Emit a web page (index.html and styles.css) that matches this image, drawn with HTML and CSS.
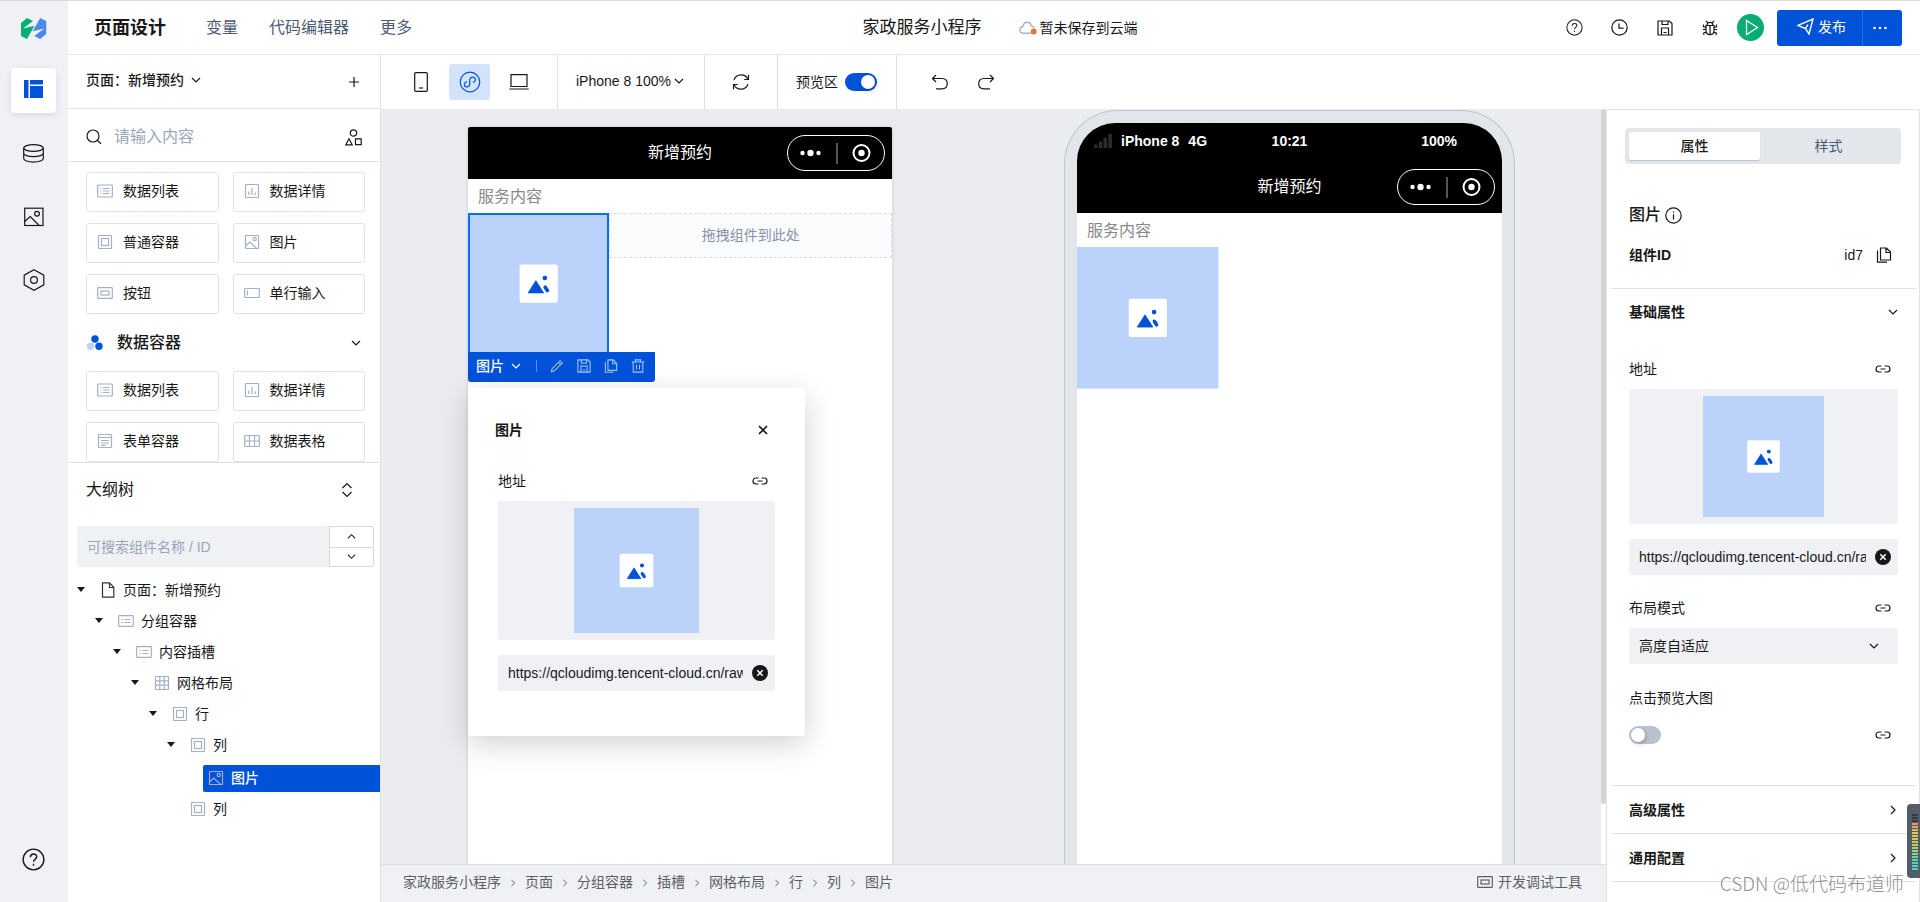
FILE: index.html
```html
<!DOCTYPE html>
<html lang="zh-CN">
<head>
<meta charset="utf-8">
<title>页面设计 - 家政服务小程序</title>
<link rel="stylesheet" href="styles.css">
</head>
<body>
<svg class="sprite" aria-hidden="true">
  <symbol id="chev-down" viewBox="0 0 10 10"><path d="M1 3l4 4 4-4"/></symbol>
  <symbol id="chev-up" viewBox="0 0 10 10"><path d="M1 7l4-4 4 4"/></symbol>
  <symbol id="chev-right" viewBox="0 0 10 10"><path d="M3 1l4 4-4 4"/></symbol>
  <symbol id="help" viewBox="0 0 20 20"><circle cx="10" cy="10" r="9"/><path d="M7.3 8c0-3.8 5.5-3.6 5.5-.4 0 2-2.7 2.2-2.7 4.4M10 13.800v1.600"/></symbol>
  <symbol id="copy" viewBox="0 0 16 16"><path d="M4.500 1h6l4 4v8h-10zM10 1v4.500h4.500M1.500 3.500V15.200H11"/></symbol>
  <symbol id="save" viewBox="0 0 16 16"><path d="M1 1h11.500L15 3.500V15H1zM4.500 15V8h7v7M5 1v3.500h6V1M6.500 12.500h3"/></symbol>
  <symbol id="link" viewBox="0 0 16 16"><path d="M6.500 5H4a3 3 0 0 0 0 6h2.500M9.500 5H12a3 3 0 0 1 0 6H9.500M5.500 8h5"/></symbol>
  <symbol id="clear" viewBox="0 0 16 16"><circle cx="8" cy="8" r="8" fill="#181818" stroke="none"/><path d="M5.300 5.300l5.400 5.400M10.700 5.300l-5.400 5.400" stroke="#fff" stroke-width="1.500"/></symbol>
  <symbol id="c-list" viewBox="0 0 16 16"><rect x=".7" y="2" width="14.600" height="12" rx=".5"/><path d="M3.500 5.500h1M3.500 8h1M3.500 10.500h1M6 5.500h6.500M6 8h6.500M6 10.500h6.500"/></symbol>
  <symbol id="c-slot" viewBox="0 0 16 16"><rect x=".7" y="2.700" width="14.600" height="10.600" rx=".5"/><path d="M3.500 6.500h1.500M3.500 9.500h1.500M6.500 6.500h6M6.500 9.500h6"/></symbol>
  <symbol id="c-chart" viewBox="0 0 16 16"><rect x="1.500" y="1.500" width="13" height="13" rx=".5"/><path d="M4.800 12V8.500M8 12V5M11.200 12V9.500"/></symbol>
  <symbol id="c-box" viewBox="0 0 16 16"><rect x="1.500" y="1.500" width="13" height="13" rx=".5"/><rect x="4.500" y="4.500" width="7" height="7"/></symbol>
  <symbol id="c-image" viewBox="0 0 16 16"><rect x="1.500" y="1.500" width="13" height="13" rx=".5"/><circle cx="10.700" cy="5" r="1.600"/><path d="M1.500 12l4.200-4 6.800 6.300"/></symbol>
  <symbol id="c-button" viewBox="0 0 16 16"><rect x=".7" y="2.700" width="14.600" height="10.600" rx=".5"/><rect x="4" y="6" width="8" height="4"/></symbol>
  <symbol id="c-input" viewBox="0 0 16 16"><rect x=".7" y="3.500" width="14.600" height="9" rx=".5"/><path d="M3.500 5.500v5"/></symbol>
  <symbol id="c-form" viewBox="0 0 16 16"><rect x="1.500" y="1.500" width="13" height="13" rx=".5"/><path d="M1.500 4.500h13M4 7.500h8M4 10h8M4 12.300h4.500"/></symbol>
  <symbol id="c-table" viewBox="0 0 16 16"><rect x=".7" y="2.500" width="14.600" height="11" rx=".5"/><path d="M.7 8h14.600M5.500 2.500v11M10.500 2.500v11"/></symbol>
  <symbol id="c-grid" viewBox="0 0 16 16"><rect x="1.500" y="1.500" width="13" height="13" rx=".5"/><path d="M1.500 5.800h13M1.500 10.200h13M5.800 1.500v13M10.200 1.500v13"/></symbol>
  <symbol id="c-page" viewBox="0 0 16 16"><path d="M2.500.800h7l4.300 4.500v9.900H2.500zM9.500 1v4.500h4"/></symbol>
  <symbol id="placeholder" viewBox="0 0 141 141"><path d="M0 0h141v141H0z" fill="#bbd3fb" stroke="none"/><rect x="51.500" y="51.500" width="38" height="38" rx="2" fill="#fff" stroke="none"/><path d="M67.700 67.500L60 79.700h15.500z" fill="#0052d9" stroke="#0052d9" stroke-width=".8" stroke-linejoin="round"/><circle cx="76.700" cy="64.800" r="2.300" fill="#0052d9" stroke="none"/><path d="M77 74l2.200 3.400" stroke="#0052d9" stroke-width="3.600" stroke-linecap="round"/></symbol>
  <symbol id="capsule" viewBox="0 0 98 36"><rect x=".5" y=".5" width="97" height="35" rx="17.500" stroke="#fff"/><g fill="#fff"><circle cx="15.500" cy="18" r="2.200"/><circle cx="23.500" cy="18" r="3.200"/><circle cx="31.500" cy="18" r="2.200"/><circle cx="74.500" cy="18" r="3.200"/></g><circle cx="74.500" cy="18" r="8" stroke="#fff" stroke-width="2"/><path d="M50 8v21" stroke="#aaa"/></symbol>
</svg>

<div class="app">
  <nav class="rail" aria-label="主导航">
    <a class="logo" href="#" aria-label="首页"><svg width="26" height="22" viewBox="0 0 26 22"><path d="M0 5L6 0l6 3L2 10.500l11.500-2.800L6 21 0 18z" fill="#07ad73" stroke="none"/><path d="M25.200 16l-6 5-6-3 10-7.500-11.500 2.800L19.200 0l6 3z" fill="#4a87f0" stroke="none"/></svg></a>
    <button class="rail-item is-active" aria-label="页面"><svg width="20" height="18" viewBox="0 0 20 18"><path d="M0 0h4.500v18H0zM6 0h13v4.500H6zM6 6h13v12H6z" fill="#0052d9" stroke="none"/></svg></button>
    <button class="rail-item" aria-label="数据源"><svg width="21" height="19" viewBox="0 0 21 19"><ellipse cx="10.500" cy="4" rx="9.800" ry="3.400"/><path d="M.7 4v10.500c0 1.800 4.300 3.600 9.800 3.600s9.800-1.800 9.800-3.600V4M.7 9.300c0 1.800 4.300 3.400 9.800 3.400s9.800-1.600 9.800-3.400"/></svg></button>
    <button class="rail-item" aria-label="素材"><svg width="20" height="20" viewBox="0 0 20 20"><rect x=".7" y="1.200" width="18.300" height="17.300"/><circle cx="13" cy="6.800" r="2.400"/><path d="M.7 14.500l5.500-5 9 9"/></svg></button>
    <button class="rail-item" aria-label="设置"><svg width="22" height="22" viewBox="0 0 22 22"><path d="M11 .8l9.800 5.300v9.800L11 21.200 1.200 15.900V6.100z"/><circle cx="11" cy="11" r="3.400"/></svg></button>
    <button class="rail-item rail-help" aria-label="帮助"><svg width="23" height="23"><use href="#help"/></svg></button>
  </nav>

  <div class="main">
    <header class="header">
      <nav class="menu">
        <a class="menu-current" href="#">页面设计</a>
        <a href="#">变量</a>
        <a href="#">代码编辑器</a>
        <a href="#">更多</a>
      </nav>
      <div class="project">
        <h1>家政服务小程序</h1>
        <div class="save-state"><svg width="18" height="14" viewBox="0 0 18 14"><path d="M12 12.300H4.500C-.300 12-.200 5.800 4 5.500 4.800-.200 11.500 0 12.300 5c1.400.2 2.500.8 3 2" stroke="#a3b1c9" stroke-width="1.400"/><circle cx="14.700" cy="10.500" r="2.900" fill="#ed7029" stroke="none"/></svg>暂未保存到云端</div>
      </div>
      <div class="actions">
        <button class="icon-btn" aria-label="帮助"><svg width="17" height="17"><use href="#help"/></svg></button>
        <button class="icon-btn" aria-label="历史"><svg width="17" height="17" viewBox="0 0 17 17"><circle cx="8.500" cy="8.500" r="7.700"/><path d="M8 4.500v4.700h4.500"/></svg></button>
        <button class="icon-btn" aria-label="保存"><svg width="16" height="16"><use href="#save"/></svg></button>
        <button class="icon-btn" aria-label="调试"><svg width="16" height="16" viewBox="0 0 16 16"><path d="M4 5.500h8v5c0 5.500-8 5.500-8 0zM5 5.300c0-4 6-4 6 0M8 5.500v9M5.500 2.500L4 .8M10.500 2.500L12 .8M4 7.500L1.500 6.800V4.500M12 7.500l2.500-.7V4.500M4 9.500H1M12 9.500h3M4.300 12l-2.500 1v2M11.700 12l2.500 1v2"/></svg></button>
        <button class="run" aria-label="预览"><svg width="14" height="17" viewBox="0 0 14 17"><path d="M1.500 1.500l11 7-11 7z" stroke="#fff" stroke-width="1.300"/></svg></button>
        <div class="publish">
          <button class="publish-main"><svg width="17" height="17" viewBox="0 0 17 17"><path d="M1 7.300L16 1l-4 15-3.500-5.500zM8.500 10.500l2.500-3.800" stroke="#fff" stroke-width="1.400"/></svg>发布</button>
          <button class="publish-more" aria-label="更多操作"><svg width="16" height="4" viewBox="0 0 16 4"><g fill="#fff" stroke="none"><circle cx="2.500" cy="2" r="1.300"/><circle cx="8" cy="2" r="1.300"/><circle cx="13.500" cy="2" r="1.300"/></g></svg></button>
        </div>
      </div>
    </header>

    <div class="workspace">
      <aside class="library">
        <div class="page-bar">
          <button class="page-select">页面：新增预约<svg width="10" height="10"><use href="#chev-down"/></svg></button>
          <button class="icon-btn" aria-label="新增"><svg width="12" height="12" viewBox="0 0 12 12"><path d="M6 1v10M1 6h10"/></svg></button>
        </div>
        <div class="search-bar">
          <svg width="16" height="16" viewBox="0 0 16 16"><circle cx="7" cy="7" r="6"/><path d="M11.500 11.500l3.500 3.300"/></svg>
          <input type="text" placeholder="请输入内容" aria-label="搜索组件">
          <button class="icon-btn" aria-label="分类"><svg width="17" height="17" viewBox="0 0 17 17"><circle cx="8.500" cy="4" r="3.200"/><path d="M4 9.800L7.200 15.800H.8zM10.500 9.800h5.700v5.900h-5.700z"/></svg></button>
        </div>
        <div class="components">
          <div class="cards">
            <button class="card"><svg><use href="#c-list"/></svg>数据列表</button>
            <button class="card"><svg><use href="#c-chart"/></svg>数据详情</button>
            <button class="card"><svg><use href="#c-box"/></svg>普通容器</button>
            <button class="card"><svg><use href="#c-image"/></svg>图片</button>
            <button class="card"><svg><use href="#c-button"/></svg>按钮</button>
            <button class="card"><svg><use href="#c-input"/></svg>单行输入</button>
          </div>
          <button class="group-head"><svg width="18" height="16" viewBox="0 0 18 16"><g stroke="none"><circle cx="9" cy="4" r="3.700" fill="#0052d9"/><circle cx="4.500" cy="11.300" r="3.700" fill="#bbd3fb"/><circle cx="13" cy="11.300" r="3.700" fill="#0052d9"/></g></svg><span>数据容器</span><svg width="10" height="10"><use href="#chev-down"/></svg></button>
          <div class="cards">
            <button class="card"><svg><use href="#c-list"/></svg>数据列表</button>
            <button class="card"><svg><use href="#c-chart"/></svg>数据详情</button>
            <button class="card"><svg><use href="#c-form"/></svg>表单容器</button>
            <button class="card"><svg><use href="#c-table"/></svg>数据表格</button>
          </div>
        </div>
        <section class="outline">
          <div class="outline-head">大纲树<button class="icon-btn" aria-label="展开"><svg width="12" height="16" viewBox="0 0 12 16"><path d="M1.500 6L6 1.500 10.500 6M1.500 10L6 14.500l4.500-4.500"/></svg></button></div>
          <div class="outline-search">
            <input type="text" placeholder="可搜索组件名称 / ID" aria-label="搜索大纲">
            <div class="stepper">
              <button aria-label="上一个"><svg width="9" height="9"><use href="#chev-up"/></svg></button>
              <button aria-label="下一个"><svg width="9" height="9"><use href="#chev-down"/></svg></button>
            </div>
          </div>
          <ul class="tree">
            <li><div class="node"><i class="caret"></i><svg class="dark"><use href="#c-page"/></svg>页面：新增预约</div>
            <ul><li><div class="node"><i class="caret"></i><svg><use href="#c-slot"/></svg>分组容器</div>
            <ul><li><div class="node"><i class="caret"></i><svg><use href="#c-slot"/></svg>内容插槽</div>
            <ul><li><div class="node"><i class="caret"></i><svg><use href="#c-grid"/></svg>网格布局</div>
            <ul><li><div class="node"><i class="caret"></i><svg><use href="#c-box"/></svg>行</div>
            <ul>
              <li><div class="node"><i class="caret"></i><svg><use href="#c-box"/></svg>列</div>
                <ul><li><div class="node is-selected"><svg><use href="#c-image"/></svg>图片</div></li></ul></li>
              <li><div class="node is-leaf"><svg><use href="#c-box"/></svg>列</div></li>
            </ul></li></ul></li></ul></li></ul></li></ul></li>
          </ul>
        </section>
      </aside>

      <div class="editor">
        <div class="toolbar">
          <div class="tool-group devices">
            <button class="device" aria-label="手机"><svg width="14" height="20" viewBox="0 0 14 20"><rect x=".7" y=".7" width="12.600" height="18.600" rx="1"/><path d="M5 16h4"/></svg></button>
            <button class="device is-active" aria-label="小程序"><svg width="22" height="22" viewBox="0 0 22 22"><circle cx="11" cy="11" r="9.800"/><path d="M8 10.500c-5.500 2.500-1 7.500 2 4.500 2-2-.5-6 1.500-8 3-3 8 2 2.500 4.500"/></svg></button>
            <button class="device" aria-label="电脑"><svg width="20" height="16" viewBox="0 0 20 16"><path d="M2 .7h16v11.800H2zM.3 15h19.400"/></svg></button>
          </div>
          <div class="tool-group"><button class="zoom">iPhone 8 100%<svg width="10" height="10"><use href="#chev-down"/></svg></button></div>
          <div class="tool-group"><button class="icon-btn refresh" aria-label="刷新"><svg width="20" height="18" viewBox="0 0 20 18"><path d="M3 6.800C5.500.5 14 .2 16.800 6M17.500 1.800V6.500h-4.300M17 11.200C14.500 17.500 6 17.800 3.200 12M2.500 16.200v-4.700h4.300"/></svg></button></div>
          <div class="tool-group preview-switch"><label for="preview">预览区</label><input class="switch" type="checkbox" id="preview" checked></div>
          <div class="tool-group history">
            <button class="icon-btn" aria-label="撤销"><svg width="18" height="16" viewBox="0 0 18 16"><path d="M5 1L1.500 4.500 5 8M1.500 4.500H11c7 .3 7 10 0 10.300H5"/></svg></button>
            <button class="icon-btn" aria-label="重做"><svg width="18" height="16" viewBox="0 0 18 16"><path d="M13 1l3.500 3.500L13 8M16.500 4.500H7c-7 .3-7 10 0 10.300h6"/></svg></button>
          </div>
        </div>

        <div class="editor-body">
          <div class="stage">
            <div class="canvas">
              <div class="screen">
                <div class="nav-bar"><span>新增预约</span><svg class="capsule"><use href="#capsule"/></svg></div>
                <p class="field-label">服务内容</p>
                <div class="columns">
                  <div class="picture is-selected">
                    <svg><use href="#placeholder"/></svg>
                    <div class="float-bar">
                      <button class="float-name">图片<svg width="10" height="10"><use href="#chev-down"/></svg></button>
                      <span class="float-sep"></span>
                      <button aria-label="编辑"><svg viewBox="0 0 16 16"><path d="M2.500 11L11.500 2l2.500 2.500-9 9-3.500 1zM9.500 4L12 6.500"/></svg></button>
                      <button aria-label="保存"><svg><use href="#save"/></svg></button>
                      <button aria-label="复制"><svg><use href="#copy"/></svg></button>
                      <button aria-label="删除"><svg viewBox="0 0 16 16"><path d="M.8 3.500h14.400M2.500 3.500V15h11V3.500M5 3.500V1h6v2.500M6.300 6.500V12M9.700 6.500V12"/></svg></button>
                    </div>
                    <section class="popup">
                      <div class="popup-head"><h2>图片</h2><button class="icon-btn" aria-label="关闭"><svg width="10" height="10" viewBox="0 0 10 10"><path d="M1 1l8 8M9 1L1 9" stroke-width="1.700"/></svg></button></div>
                      <div class="popup-form">
                        <div class="field-head"><label for="popup-url">地址</label><button class="icon-btn" aria-label="绑定"><svg width="16" height="16"><use href="#link"/></svg></button></div>
                        <div class="thumb"><svg width="125" height="125"><use href="#placeholder"/></svg></div>
                        <div class="url-box"><input id="popup-url" type="text" value="https://qcloudimg.tencent-cloud.cn/raw/"><button class="icon-btn" aria-label="清除"><svg width="16" height="16"><use href="#clear"/></svg></button></div>
                      </div>
                    </section>
                  </div>
                  <div class="drop-zone">拖拽组件到此处</div>
                </div>
              </div>

              <div class="phone">
                <div class="phone-screen">
                  <div class="status-bar">
                    <span class="carrier"><svg width="18" height="14" viewBox="0 0 18 14"><path d="M0 10.500h3.500V14H0zM4.800 7.500h3.500V14H4.800zM9.500 3.800H13V14H9.500zM14.300 0H18v14h-3.700z" fill="#2b2b2b" stroke="none"/></svg><b>iPhone 8</b><b>4G</b></span>
                    <b>10:21</b>
                    <b class="battery">100%</b>
                  </div>
                  <div class="nav-bar"><span>新增预约</span><svg class="capsule"><use href="#capsule"/></svg></div>
                  <p class="field-label">服务内容</p>
                  <div class="columns"><div class="picture"><svg><use href="#placeholder"/></svg></div></div>
                </div>
              </div>
              <div class="scroll-track"><div class="scroll-thumb"></div></div>
            </div>
            <footer class="footer">
              <nav class="crumbs" aria-label="路径">
                <a href="#">家政服务小程序</a><svg><use href="#chev-right"/></svg><a href="#">页面</a><svg><use href="#chev-right"/></svg><a href="#">分组容器</a><svg><use href="#chev-right"/></svg><a href="#">插槽</a><svg><use href="#chev-right"/></svg><a href="#">网格布局</a><svg><use href="#chev-right"/></svg><a href="#">行</a><svg><use href="#chev-right"/></svg><a href="#">列</a><svg><use href="#chev-right"/></svg><a href="#">图片</a>
              </nav>
              <button class="devtools"><svg width="16" height="16"><use href="#c-button"/></svg>开发调试工具</button>
            </footer>
          </div>

          <aside class="props">
            <div class="tabs" role="tablist"><button class="tab is-active" role="tab">属性</button><button class="tab" role="tab">样式</button></div>
            <div class="props-title"><h2>图片</h2><svg width="17" height="17" viewBox="0 0 17 17"><circle cx="8.500" cy="8.500" r="7.700"/><path d="M8.500 7.300V12.500M8.500 4.500v1.300" stroke-width="1.200"/></svg></div>
            <div class="props-id"><strong>组件ID</strong><span>id7</span><button class="icon-btn" aria-label="复制ID"><svg width="16" height="16"><use href="#copy"/></svg></button></div>
            <button class="section-head">基础属性<svg width="10" height="10"><use href="#chev-down"/></svg></button>
            <div class="section-form">
              <div class="field-head"><label for="prop-url">地址</label><button class="icon-btn" aria-label="绑定"><svg width="16" height="16"><use href="#link"/></svg></button></div>
              <div class="thumb"><svg width="121" height="121"><use href="#placeholder"/></svg></div>
              <div class="url-box"><input id="prop-url" type="text" value="https://qcloudimg.tencent-cloud.cn/raw/"><button class="icon-btn" aria-label="清除"><svg width="16" height="16"><use href="#clear"/></svg></button></div>
              <div class="field-head next"><label for="mode">布局模式</label><button class="icon-btn" aria-label="绑定"><svg width="16" height="16"><use href="#link"/></svg></button></div>
              <div class="select-box"><select id="mode"><option>高度自适应</option></select><svg width="10" height="10"><use href="#chev-down"/></svg></div>
              <div class="field-head next"><label for="enlarge">点击预览大图</label></div>
              <div class="switch-row"><input class="switch" type="checkbox" id="enlarge"><button class="icon-btn" aria-label="绑定"><svg width="16" height="16"><use href="#link"/></svg></button></div>
            </div>
            <button class="section-head ruled">高级属性<svg width="10" height="10"><use href="#chev-right"/></svg></button>
            <button class="section-head ruled">通用配置<svg width="10" height="10"><use href="#chev-right"/></svg></button>
          </aside>
        </div>
      </div>
    </div>
  </div>
</div>
<div class="meter" aria-hidden="true"><div class="meter-bars"></div></div>
<div class="watermark">CSDN @低代码布道师</div>
</body>
</html>
```

FILE: styles.css
```css
* { box-sizing: border-box; }

body {
  margin: 0;
  color: #181818;
  background: #fff;
  font: 14px/24px "Liberation Sans", "Noto Sans CJK SC", sans-serif;
}

button, input, select {
  margin: 0;
  padding: 0;
  border: 0;
  background: none;
  color: inherit;
  font: inherit;
  outline: none;
}

a { color: inherit; text-decoration: none; }
h1, h2, p, ul { margin: 0; padding: 0; }
ul { list-style: none; }
h2 { font-size: 14px; }

svg {
  display: block;
  flex: none;
  fill: none;
  stroke: currentColor;
  stroke-width: 1.2;
}

.sprite { position: absolute; width: 0; height: 0; }

.icon-btn { display: flex; flex: none; align-items: center; justify-content: center; }

.app {
  display: flex;
  height: 100vh;
  border-top: 1px solid #dcdcdc;
}

/* Icon rail */
.rail {
  display: flex;
  flex: none;
  flex-direction: column;
  align-items: center;
  gap: 18px;
  width: 68px;
  padding: 17px 1px 20px 0;
  background: #f0f1f5;
}
.logo { display: block; margin-bottom: 10px; }
.rail-item {
  display: flex;
  align-items: center;
  justify-content: center;
  width: 45px;
  height: 45px;
  border-radius: 4px;
}
.rail-item.is-active { padding-bottom: 3px; background: #fff; box-shadow: 0 2px 6px rgba(40, 60, 100, .12); }
.rail-help { margin-top: auto; }

/* Header */
.main { display: flex; flex: 1; flex-direction: column; min-width: 0; }
.header {
  display: grid;
  flex: none;
  grid-template-columns: 1fr auto 1fr;
  align-items: center;
  height: 54px;
  padding: 0 18px 0 26px;
  border-bottom: 1px solid #e4e6ec;
}
.menu { display: flex; align-items: center; gap: 32px; color: #4b5b76; font-size: 16px; }
.menu a + a + a { margin-left: -1px; }
.menu .menu-current { margin-right: 8px; color: #181818; font-size: 18px; font-weight: 700; }
.project { display: flex; align-items: center; gap: 37px; margin-left: 4px; }
.project h1 { font-size: 17px; font-weight: 400; }
.save-state { display: flex; align-items: center; gap: 3px; }
.actions { display: flex; align-items: center; justify-content: flex-end; }
.actions .icon-btn { width: 45px; height: 36px; }
.run {
  display: flex;
  align-items: center;
  justify-content: center;
  width: 27px;
  height: 27px;
  margin: 0 13px 0 5px;
  padding-left: 3px;
  border-radius: 50%;
  background: #07ad73;
}
.publish { display: flex; height: 36px; border-radius: 3px; background: #0052d9; color: #fff; }
.publish-main { display: flex; align-items: center; gap: 4px; width: 86px; padding: 0 0 2px 20px; border-right: 1px solid #2b6ce0; }
.publish-more { display: flex; align-items: center; justify-content: center; width: 39px; padding-right: 6px; }

/* Component library */
.workspace { display: flex; flex: 1; min-height: 0; }
.library {
  display: flex;
  flex: none;
  flex-direction: column;
  width: 313px;
  border-right: 1px solid #dfe2e9;
}
.page-bar, .search-bar {
  display: flex;
  flex: none;
  align-items: center;
  height: 54px;
  padding: 0 18px;
  border-bottom: 1px solid #e0e3e9;
}
.page-bar { justify-content: space-between; padding-right: 20px; }
.page-select { display: flex; align-items: center; gap: 7px; padding-bottom: 3px; font-weight: 500; }
.search-bar { height: 53px; padding-top: 4px; font-size: 16px; }
.search-bar input { flex: 1; min-width: 0; margin-left: 12px; }
input::placeholder { color: #99a6bc; opacity: 1; }
.components { flex: none; padding: 10px 15px 0 18px; }
.cards { display: grid; grid-template-columns: 1fr 1fr; gap: 11px 14px; }
.card {
  display: flex;
  align-items: center;
  gap: 10px;
  height: 40px;
  padding: 0 10px 2px;
  border: 1px solid #e0e3ea;
  border-radius: 3px;
}
.card svg, .node svg { width: 16px; height: 16px; color: #a3b0c6; }
.group-head { display: flex; align-items: center; width: 100%; height: 57px; padding-right: 4px; font-size: 16px; font-weight: 500; }
.group-head span { flex: 1; margin-left: 13px; text-align: left; }

/* Outline tree */
.outline { flex: 1; min-height: 0; border-top: 1px solid #dcdfe4; }
.outline-head { display: flex; align-items: center; justify-content: space-between; height: 54px; padding: 0 27px 0 18px; font-size: 16px; }
.outline-search { display: flex; height: 41px; margin: 9px 6px 8px 9px; }
.outline-search input { flex: 1; min-width: 0; padding-left: 10px; border-radius: 3px 0 0 3px; background: #f0f1f5; }
.stepper { display: grid; grid-template-rows: 1fr 1fr; width: 45px; border: 1px solid #d9d9d9; border-radius: 0 2px 2px 0; }
.stepper button { display: flex; align-items: center; justify-content: center; }
.stepper button + button { border-top: 1px solid #d9d9d9; }
.tree { padding-left: 9px; }
.tree ul { padding-left: 18px; }
.node { display: flex; align-items: center; height: 31px; padding-bottom: 2px; }
.node svg { margin-right: 7px; }
.node .dark { color: #333; }
.caret { width: 0; margin-right: 15px; border: 4px solid transparent; border-top: 5px solid #181818; border-bottom: 0; }
.node.is-leaf { padding-left: 23px; }
.node.is-selected {
  height: 27px;
  margin: 4px 0 2px 18px;
  padding: 0 0 1px 5px;
  border-radius: 2px 0 0 2px;
  background: #0052d9;
  color: #fff;
  font-weight: 500;
}

/* Toolbar */
.editor { display: flex; flex: 1; flex-direction: column; min-width: 0; }
.toolbar { display: flex; flex: none; height: 54px; }
.tool-group { display: flex; align-items: center; border-right: 1px solid #dcdfe8; }
.devices { gap: 8px; padding: 0 18px 0 19px; }
.device { display: flex; align-items: center; justify-content: center; width: 41px; height: 36px; border-radius: 3px; }
.device.is-active { background: #d3e3fc; color: #0052d9; }
.zoom { display: flex; align-items: center; gap: 3px; padding: 0 20px 2px 18px; }
.refresh { width: 72px; }
.preview-switch { gap: 7px; padding: 0 19px 0 18px; }
.history { gap: 28px; padding-left: 34px; border-right: 0; }

.switch {
  display: block;
  flex: none;
  width: 32px;
  height: 18px;
  padding: 2px;
  border-radius: 9px;
  background: #b9c1cf;
  appearance: none;
}
.switch::before { display: block; width: 14px; height: 14px; border-radius: 50%; background: #fff; box-shadow: 1px 2px 4px rgba(0, 0, 0, .2); content: ""; }
.switch:checked { background: #0052d9; }
.switch:checked::before { margin-left: auto; }

/* Canvas */
.editor-body { display: flex; flex: 1; min-height: 0; }
.stage { display: flex; flex: 1; flex-direction: column; min-width: 0; }
.canvas {
  position: relative;
  display: flex;
  flex: 1;
  gap: 172px;
  min-height: 0;
  padding-left: 87px;
  overflow: hidden;
  background: #ebecf0;
}
.screen { flex: none; width: 424px; margin-top: 18px; background: #fff; box-shadow: 0 0 4px rgba(0, 0, 0, .12); }
.nav-bar {
  display: grid;
  grid-template-columns: 1fr auto 1fr;
  align-items: center;
  height: 52px;
  padding-right: 7px;
  padding-left: 7px;
  background: #000;
  color: #fff;
  font-size: 16px;
}
.nav-bar span { grid-column: 2; }
.capsule { justify-self: end; width: 98px; height: 36px; stroke-width: 1; stroke: none; }
.screen .nav-bar { border-radius: 2px 2px 0 0; }
.field-label { height: 34px; padding-left: 10px; color: #888; font-size: 16px; line-height: 35px; }
.columns { display: grid; grid-template-columns: 1fr 2fr; align-items: start; }
.picture { position: relative; aspect-ratio: 1; }
.picture > svg { width: 100%; height: 100%; }
.picture.is-selected > svg { outline: 2px solid #0a6cff; outline-offset: -2px; }
.drop-zone { height: 45px; border: 1px dashed #dadce0; background: #fafbfd; color: #8692a8; line-height: 42px; text-align: center; }
.float-bar {
  position: absolute;
  top: 139px;
  left: 0;
  display: flex;
  align-items: center;
  gap: 13px;
  height: 30px;
  padding: 0 10px 2px 8px;
  border-radius: 0 0 3px 3px;
  background: #0052d9;
  color: #a9c5f3;
}
.float-bar button svg { width: 14px; height: 14px; }
.float-bar .float-name { display: flex; align-items: center; gap: 7px; margin-right: 2px; color: #fff; font-weight: 500; white-space: nowrap; }
.float-bar .float-name svg { width: 10px; height: 10px; }
.float-sep { width: 1px; height: 12px; background: #5a8fe8; }
.popup {
  position: absolute;
  top: 175px;
  left: 0;
  width: 337px;
  padding: 30px 30px 45px;
  border-radius: 3px;
  background: #fff;
  box-shadow: 0 8px 30px rgba(0, 0, 0, .18);
}
.popup-head { display: flex; align-items: center; justify-content: space-between; margin: 0 7px 27px -3px; }
.field-head { display: flex; align-items: center; justify-content: space-between; height: 24px; margin-bottom: 8px; padding-right: 7px; }
.field-head.next { margin-top: 21px; }
.thumb { display: flex; justify-content: center; margin-bottom: 15px; padding: 7px 0; border-radius: 3px; background: #f0f1f5; }
.url-box { display: flex; align-items: center; gap: 9px; height: 36px; padding: 0 7px 0 10px; border-radius: 3px; background: #f0f1f5; }
.url-box input { flex: 1; min-width: 0; }

/* Phone preview */
.phone {
  flex: none;
  width: 451px;
  margin-top: 1px;
  padding: 12px 12px 0;
  border: 1px solid #bdc4d2;
  border-bottom: 0;
  border-radius: 54px 54px 0 0;
  background: #e2e5ea;
}
.phone-screen { height: 100%; overflow: hidden; border-radius: 38px 38px 0 0; background: #fff; }
.status-bar { display: grid; grid-template-columns: 1fr auto 1fr; align-items: center; height: 38px; padding: 0 17px 2px; background: #000; color: #fff; font-size: 14px; }
.carrier { display: flex; align-items: center; gap: 9px; }
.battery { margin-right: 28px; text-align: right; }
.scroll-track { position: absolute; top: 0; right: 0; bottom: 0; width: 5px; background: #fff; }
.scroll-thumb { height: 92%; border-radius: 3px; background: #d3d3d3; }

/* Footer */
.footer {
  display: flex;
  flex: none;
  align-items: center;
  justify-content: space-between;
  height: 38px;
  padding: 0 24px 4px 22px;
  border-top: 1px solid #dadde6;
  background: #f0f1f5;
  color: #5c5f66;
}
.crumbs { display: flex; align-items: center; }
.crumbs svg { width: 8px; height: 8px; margin: 2px 8px 0; }
.devtools { display: flex; align-items: center; gap: 5px; }

/* Property panel */
.props { flex: none; width: 314px; padding: 18px 3px 0 4px; overflow: hidden; border: 1px solid #e0e3e9; border-bottom: 0; }
.tabs { display: grid; grid-template-columns: 131fr 137fr; height: 36px; margin: 0 15px 39px 14px; padding: 4px; border-radius: 4px; background: #e3e6eb; }
.tab { color: #4b5b76; }
.tab.is-active { border-radius: 2px; background: #fff; box-shadow: 0 1px 1px #b9c1cf; color: #181818; font-weight: 500; }
.props-title { display: flex; align-items: center; gap: 4px; padding: 0 18px; }
.props-title h2 { font-size: 16px; font-weight: 500; }
.props-id { display: flex; align-items: center; margin-top: 16px; padding: 0 24px 21px 18px; border-bottom: 1px solid #e0e3e9; }
.props-id span { margin: 0 13px 0 auto; }
.section-head { display: flex; align-items: center; justify-content: space-between; width: 100%; height: 46px; padding: 0 18px; font-weight: 700; }
.section-head.ruled { height: 48px; border-bottom: 1px solid #e0e3e9; }
.section-form { padding: 22px 18px 41px; border-bottom: 1px solid #e0e3e9; }
.select-box { display: flex; align-items: center; height: 36px; margin-bottom: 22px; padding-right: 19px; border-radius: 3px; background: #f0f1f5; }
.select-box select { flex: 1; height: 34px; padding-left: 10px; appearance: none; }
.select-box + .field-head.next { margin-top: 0; }
.switch-row { display: flex; align-items: center; justify-content: space-between; height: 18px; margin-top: 16px; padding-right: 7px; }

/* Overlays */
.meter { position: absolute; top: 804px; right: 0; width: 13px; height: 74px; padding: 9px 2px 8px 5px; border-radius: 4px 0 0 4px; background: #545b6b; }
.meter-bars { height: 100%; background: repeating-linear-gradient(#545b6b 0 1px, transparent 1px 3px), linear-gradient(#333a49 0 17%, #f0905a 18%, #e8c450 35%, #b5d45c 58%, #4cd9a8 85%, #3fd8cf); }
.watermark { position: absolute; right: 16px; bottom: 5px; color: rgba(90, 90, 90, .7); font-family: "Noto Sans CJK SC", sans-serif; font-size: 19px; font-weight: 300; line-height: 28px; text-shadow: 0 0 1px #fff; }
```
